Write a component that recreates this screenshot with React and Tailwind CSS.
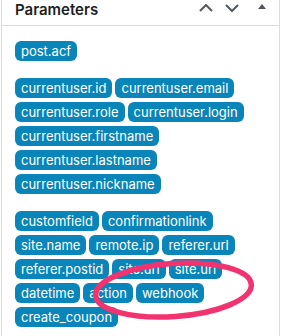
import React from "react";

const groups = [
  ["post.acf"],
  [
    "currentuser.id",
    "currentuser.email",
    "currentuser.role",
    "currentuser.login",
    "currentuser.firstname",
    "currentuser.lastname",
    "currentuser.nickname",
  ],
  [
    "customfield",
    "confirmationlink",
    "site.name",
    "remote.ip",
    "referer.url",
    "referer.postid",
    "site.url",
    "site.url",
    "datetime",
    "action",
    "webhook",
    "create_coupon",
  ],
];

function Chip({ label }) {
  return (
    <span className="h-[20px] px-[6px] rounded-[6px] bg-[#0a85b9] text-white text-[13px] leading-[20px] whitespace-nowrap">
      {label}
    </span>
  );
}

export default function App() {
  return (
    <div
      className="relative w-[281px] h-[336px] bg-white overflow-hidden"
      style={{ fontFamily: "Inter, 'Noto Sans', sans-serif" }}
    >
      <div className="ml-[1px] w-[279px] h-full border-x border-[#dcdcde]">
        <div className="h-[26px] border-b border-[#dcdcde] flex items-start pl-[13px] pr-[13px]">
          <span className="text-[15px] leading-[19px] font-semibold text-[#1e1e1e]">
            Parameters
          </span>
          <div className="ml-auto flex items-start pt-[4px]">
            <svg width="14" height="8" viewBox="0 0 14 8" className="text-[#50575e]">
              <path d="M1 7 L7 1 L13 7" fill="none" stroke="currentColor" strokeWidth="2" />
            </svg>
            <svg width="14" height="8" viewBox="0 0 14 8" className="ml-[12px] text-[#50575e]">
              <path d="M1 1 L7 7 L13 1" fill="none" stroke="currentColor" strokeWidth="2" />
            </svg>
            <svg width="8" height="5" viewBox="0 0 8 5" className="ml-[19px] text-[#50575e]">
              <path d="M0 5 L4 0 L8 5 Z" fill="currentColor" />
            </svg>
          </div>
        </div>
        <div className="pl-[13px] pr-[10px] pt-[15px] flex flex-col gap-[17px]">
          {groups.map((g, i) => (
            <div key={i} className="flex flex-wrap gap-x-[3px] gap-y-[4px]">
              {g.map((c, j) => (
                <Chip key={j} label={c} />
              ))}
            </div>
          ))}
        </div>
      </div>
      <svg
        width="281"
        height="336"
        viewBox="0 0 281 336"
        className="absolute left-0 top-0 pointer-events-none"
      >
        <ellipse
          cx="173.5"
          cy="290"
          rx="78"
          ry="26.5"
          transform="rotate(-4 173.5 290)"
          fill="none"
          stroke="#f2336f"
          strokeWidth="5.5"
        />
      </svg>
    </div>
  );
}
